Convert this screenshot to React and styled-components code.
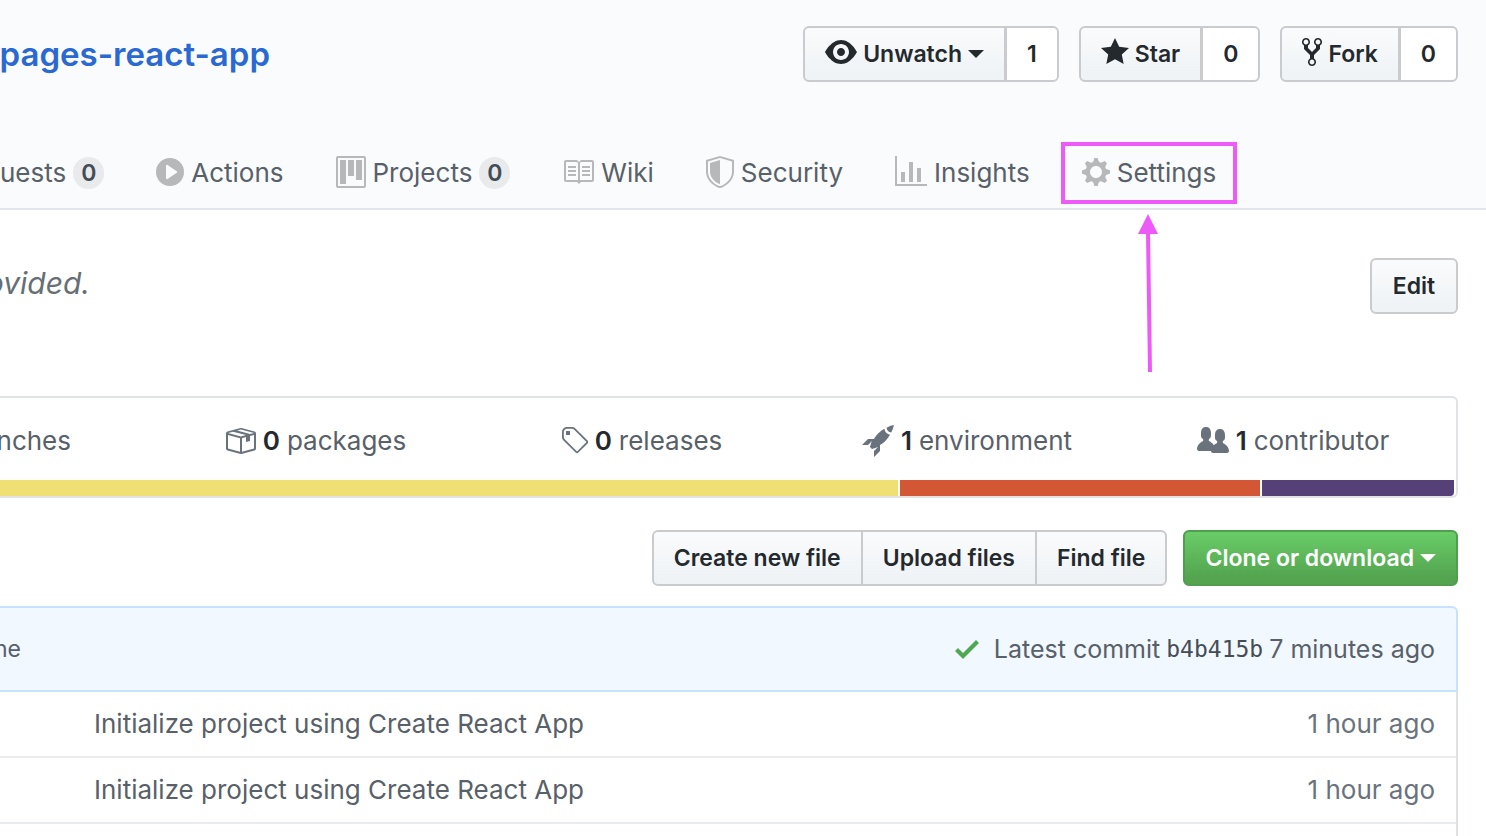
import React from "react";
import styled, { createGlobalStyle, css } from "styled-components";

const Global = createGlobalStyle`
  * { box-sizing: border-box; }
  body {
    margin: 0;
    background: #fff;
    color: #24292e;
    font-family: Inter, "Liberation Sans", sans-serif;
    font-size: 26px;
    line-height: 36px;
    overflow: hidden;
  }
  a { color: inherit; text-decoration: none; }
  button { font-family: inherit; cursor: pointer; }
`;

const PATHS = {
  eye: "M8.06 2C3 2 0 8 0 8s3 6 8.06 6C13 14 16 8 16 8s-3-6-7.94-6zM8 12c-2.2 0-4-1.78-4-4 0-2.2 1.8-4 4-4 2.22 0 4 1.8 4 4 0 2.22-1.78 4-4 4zm2-4c0 1.11-.89 2-2 2-1.11 0-2-.89-2-2 0-1.11.89-2 2-2 1.11 0 2 .89 2 2z",
  star: "M14 6l-4.9-.64L7 1 4.9 5.36 0 6l3.6 3.26L2.67 14 7 11.67 11.33 14l-.93-4.74L14 6z",
  fork: "M8 1a1.993 1.993 0 0 0-1 3.72V6L5 8 3 6V4.72A1.993 1.993 0 0 0 2 1a1.993 1.993 0 0 0-1 3.72V6.5l3 3v1.78A1.993 1.993 0 0 0 5 15a1.993 1.993 0 0 0 1-3.72V9.5l3-3V4.72A1.993 1.993 0 0 0 8 1zM2 4.2C1.34 4.2.8 3.65.8 3c0-.65.55-1.2 1.2-1.2.65 0 1.2.55 1.2 1.2 0 .65-.55 1.2-1.2 1.2zm3 10c-.66 0-1.2-.55-1.2-1.2 0-.65.55-1.2 1.2-1.2.65 0 1.2.55 1.2 1.2 0 .65-.55 1.2-1.2 1.2zm3-10c-.66 0-1.2-.55-1.2-1.2 0-.65.55-1.2 1.2-1.2.65 0 1.2.55 1.2 1.2 0 .65-.55 1.2-1.2 1.2z",
  play: "M14 8A7 7 0 1 1 0 8a7 7 0 0 1 14 0zm-8.223 3.482l4.599-3.066a.5.5 0 0 0 0-.832L5.777 4.518A.5.5 0 0 0 5 4.934v6.132a.5.5 0 0 0 .777.416z",
  project: "M10 12h3V2h-3v10zm-4-2h3V2H6v8zm-4 4h3V2H2v12zm-1 1h13V1H1v14zM14 0H1a1 1 0 0 0-1 1v14a1 1 0 0 0 1 1h13a1 1 0 0 0 1-1V1a1 1 0 0 0-1-1z",
  book: "M3 5h4v1H3V5zm0 3h4V7H3v1zm0 2h4V9H3v1zm11-5h-4v1h4V5zm0 2h-4v1h4V7zm0 2h-4v1h4V9zm2-6v9c0 .55-.45 1-1 1H9.5l-1 1-1-1H2c-.55 0-1-.45-1-1V3c0-.55.45-1 1-1h5.5l1 1 1-1H15c.55 0 1 .45 1 1zm-8 .5L7.5 3H2v9h6V3.5zm7-.5H9.5l-.5.5V12h6V3z",
  shield: "M0 2l7-2 7 2v6.02C14 12.69 8.69 16 7 16c-1.69 0-7-3.31-7-7.98V2zm1 .75L7 1l6 1.75v5.268C13 12.104 8.449 15 7 15c-1.449 0-6-2.896-6-6.982V2.75zm1 .75L7 2v12c-1.207 0-5-2.482-5-5.985V3.5z",
  graph: "M16 14v1H0V0h1v14h15zM5 13H3V8h2v5zm4 0H7V3h2v10zm4 0h-2V6h2v7z",
  gear: "M14 8.77v-1.6l-1.94-.64-.45-1.09.88-1.84-1.13-1.13-1.81.91-1.09-.45-.69-1.92h-1.6l-.63 1.94-1.11.45-1.84-.88-1.13 1.13.91 1.81-.45 1.09L0 7.23v1.59l1.94.64.45 1.09-.88 1.84 1.13 1.13 1.81-.91 1.09.45.69 1.92h1.59l.63-1.94 1.11-.45 1.84.88 1.13-1.13-.92-1.81.47-1.09L14 8.75v.02zM7 11c-1.66 0-3-1.34-3-3s1.34-3 3-3 3 1.34 3 3-1.34 3-3 3z",
  box: "M1 4.27v7.47c0 .45.3.84.75.97l6.5 1.73c.16.05.34.05.5 0l6.5-1.73c.45-.13.75-.52.75-.97V4.27c0-.45-.3-.84-.75-.97l-6.5-1.74a1.4 1.4 0 0 0-.5 0L1.75 3.3c-.45.13-.75.52-.75.97zm7 9.09l-6-1.59V5l6 1.61v6.75zM2 4l2.5-.67L11 5.06l-2.5.67L2 4zm13 7.77l-6 1.59V6.61l2-.55V8.5l2-.53V5.53L15 5v6.77zm-2-7.24L6.5 2.8l2-.53L15 4l-2 .53z",
  tag: "M7.73 1.73C7.26 1.26 6.62 1 5.96 1H3.5C2.13 1 1 2.13 1 3.5v2.47c0 .66.27 1.3.73 1.77l6.06 6.06c.39.39 1.02.39 1.41 0l4.59-4.59a.996.996 0 0 0 0-1.41L7.73 1.73zM2.38 7.09c-.31-.3-.47-.7-.47-1.13V3.5c0-.88.72-1.59 1.59-1.59h2.47c.42 0 .83.16 1.13.47l6.14 6.13-4.73 4.73-6.13-6.15zM3.01 3h2v2H3V3h.01z",
  rocket: "M12.17 3.83c-.27-.27-.47-.55-.63-.88-.16-.31-.27-.66-.34-1.02-.58.33-1.16.7-1.73 1.13-.58.44-1.14.94-1.69 1.48-.7.7-1.33 1.81-1.78 2.45H3L0 10h3l2-2c-.34.77-1.02 2.98-1 3l1 1c.02.02 2.23-.64 3-1l-2 2v3l3-3v-3c.64-.45 1.75-1.09 2.45-1.78.55-.55 1.05-1.13 1.47-1.7.44-.58.81-1.16 1.14-1.72-.36-.08-.7-.19-1.03-.34a3.39 3.39 0 0 1-.86-.63zM16 0s-.09.38-.3 1.06c-.2.7-.55 1.58-1.06 2.66-.7-.08-1.27-.33-1.66-.72-.39-.39-.63-.94-.7-1.64C13.36.84 14.23.48 14.92.28 15.62.08 16 0 16 0z",
  people: "M16 12.999c0 .439-.45 1-1 1H7.995c-.539 0-.994-.447-.995-.999H1c-.54 0-1-.561-1-1 0-2.634 3-4 3-4s.229-.409 0-1c-.841-.621-1.058-.59-1-3 .058-2.419 1.367-3 2.5-3s2.442.58 2.5 3c.058 2.41-.159 2.379-1 3-.229.59 0 1 0 1s1.549.711 2.42 2.088C9.196 9.369 10 8.999 10 8.999s.229-.409 0-1c-.841-.62-1.058-.59-1-3 .058-2.419 1.367-3 2.5-3s2.437.581 2.495 3c.059 2.41-.158 2.38-1 3-.229.59 0 1 0 1s3.005 1.366 3.005 4",
  check: "M12 5l-8 8-4-4 1.5-1.5L4 10l6.5-6.5L12 5z",
};

const Glyph = styled.svg`
  flex: none;
  display: block;
  height: 32px;
  fill: currentColor;
`;

function Icon({ name, w = 16 }) {
  return (
    <Glyph width={w * 2} viewBox={`0 0 ${w} 16`} aria-hidden="true">
      <path fillRule="evenodd" d={PATHS[name]} />
    </Glyph>
  );
}

const Page = styled.div`
  min-height: 100vh;
  display: flex;
  flex-direction: column;
`;

const Header = styled.header`
  background: #fafbfd;
  border-bottom: 2px solid #e1e4e8;
  padding: 26px 0 4px;
`;

const TitleRow = styled.div`
  display: flex;
  justify-content: space-between;
  align-items: center;
  padding-right: 28px;
`;

const Title = styled.h1`
  margin: 0;
  font-size: 33px;
  font-weight: 600;
  line-height: 56px;
  color: #2a69d2;
`;

const Clipped = styled.span`
  display: flex;
  justify-content: flex-end;
  overflow: hidden;
  white-space: nowrap;
  width: ${(p) => p.$width}px;
`;

const Actions = styled.div`
  display: flex;
  gap: 20px;
`;

const control = css`
  display: flex;
  align-items: center;
  justify-content: center;
  height: 56px;
  border: 2px solid #c9cbce;
  font-size: 23px;
  font-weight: 600;
  color: #24292e;
  white-space: nowrap;
`;

const Button = styled.button`
  ${control}
  gap: 6px;
  min-width: 88px;
  padding: 0 20px;
  border-radius: 6px;
  background: linear-gradient(#fafbfc, #eff3f6 90%);
  svg { margin-bottom: 4px; }
`;

const GreenButton = styled(Button)`
  color: #fff;
  border-color: #4f9f4f;
  background: linear-gradient(#69cd67, #53a34f 90%);
`;

const Group = styled.div`
  display: flex;
  & > * { border-radius: 0; }
  & > * + * { margin-left: -1px; border-left-width: 1px; }
  & > :first-child { border-radius: 6px 0 0 6px; }
  & > :last-child { border-radius: 0 6px 6px 0; }
`;

const Count = styled.a`
  ${control}
  padding: 0 20px;
  background: #fff;
`;

const Caret = styled.span`
  border: 8px solid transparent;
  border-top-color: currentColor;
  border-bottom: 0;
`;

const Tabs = styled.nav`
  display: flex;
  gap: 10px;
  margin-top: 60px;
`;

const Tab = styled.a`
  position: relative;
  display: flex;
  align-items: center;
  gap: 7px;
  height: 62px;
  padding: 0 17px;
  border: 4px solid ${(p) => (p.$marked ? "#ee5af8" : "transparent")};
  color: #586069;
  white-space: nowrap;
  ${(p) => p.$cut && "padding-left: 0; border-left: 0;"}
  ${Glyph} { color: #b7b8ba; margin-bottom: 2px; }
`;

const Badge = styled.span`
  min-width: 31px;
  padding: 0 7px;
  border-radius: 16px;
  background: #e8eaec;
  color: #444d56;
  font-size: 23px;
  font-weight: 600;
  line-height: 32px;
  text-align: center;
`;

const Arrow = styled.svg`
  position: absolute;
  left: 72px;
  top: 68px;
  z-index: 1;
`;

const Main = styled.main`
  flex: 1;
  display: flex;
  flex-direction: column;
  padding-right: 28px;
`;

const About = styled.section`
  display: flex;
  justify-content: space-between;
  align-items: center;
  margin-top: 48px;
`;

const Description = styled.em`
  color: #666e76;
  font-size: 30px;
  line-height: 36px;
  padding-bottom: 6px;
`;

const Summary = styled.section`
  margin-top: 82px;
  border: 2px solid #e0e2e6;
  border-left: 0;
  border-radius: 0 6px 6px 0;
`;

const Stats = styled.ul`
  display: grid;
  grid-template-columns: 152px repeat(4, 1fr);
  margin: 0;
  padding: 0;
  list-style: none;
`;

const Stat = styled.li`
  display: flex;
  justify-content: ${(p) => (p.$cut ? "flex-start" : "center")};
  height: 82px;
  padding-top: 3px;
  a {
    display: flex;
    align-items: center;
    gap: 7px;
    color: #586069;
    white-space: nowrap;
  }
  svg { color: #6a737d; }
  b { color: #24292e; font-weight: 600; }
`;

const LanguageBar = styled.div`
  display: flex;
  gap: 2px;
  height: 16px;
  padding-right: 2px;
`;

const Language = styled.span`
  flex: ${(p) => p.$share} 1 0;
  background: ${(p) => p.$color};
  &:last-child { border-bottom-right-radius: 4px; }
`;

const FileActions = styled.div`
  display: flex;
  justify-content: flex-end;
  gap: 16px;
  margin-top: 32px;
`;

const Commit = styled.div`
  display: flex;
  justify-content: space-between;
  align-items: center;
  height: 86px;
  margin-top: 20px;
  padding-right: 21px;
  border: 2px solid #c8e1ff;
  border-left: 0;
  border-radius: 0 6px 0 0;
  background: #f1f8ff;
  color: #586069;
  font-size: 25px;
`;

const CommitInfo = styled.div`
  display: flex;
  align-items: center;
  gap: 6px;
  white-space: nowrap;
  svg { color: #50a950; margin-right: 9px; }
`;

const Sha = styled.a`
  color: #444d56;
  font-family: "DejaVu Sans Mono", monospace;
  font-size: 23px;
`;

const Author = styled.span`
  font-size: 23px;
`;

const Files = styled.div`
  flex: 1;
  border-right: 2px solid #dfe2e5;
`;

const FileTable = styled.table`
  width: 100%;
  border-spacing: 0;
`;

const Cell = styled.td`
  height: 66px;
  padding: 0 ${(p) => (p.$age ? "21px" : "0")} 0 ${(p) => (p.$age ? "0" : "94px")};
  border-bottom: 2px solid #eaecef;
  text-align: ${(p) => (p.$age ? "right" : "left")};
  color: ${(p) => (p.$age ? "#6a737d" : "#586069")};
`;

const tabs = [
  { label: "Actions", icon: "play", w: 14 },
  { label: "Projects", icon: "project", w: 15, count: 0 },
  { label: "Wiki", icon: "book", w: 16 },
  { label: "Security", icon: "shield", w: 14 },
  { label: "Insights", icon: "graph", w: 16 },
];

const stats = [
  { icon: "box", w: 16, n: 0, label: "packages" },
  { icon: "tag", w: 14, n: 0, label: "releases" },
  { icon: "rocket", w: 16, n: 1, label: "environment" },
  { icon: "people", w: 16, n: 1, label: "contributor" },
];

const languages = [
  { color: "#f0df72", share: 898 },
  { color: "#d35635", share: 360 },
  { color: "#554078", share: 192 },
];

const files = [
  { message: "Initialize project using Create React App", age: "1 hour ago" },
  { message: "Initialize project using Create React App", age: "1 hour ago" },
];

export default function App() {
  return (
    <Page>
      <Global />
      <Header>
        <TitleRow>
          <Title>
            <a href="#repo"><Clipped $width={270}>pages-react-app</Clipped></a>
          </Title>
          <Actions>
            <Group>
              <Button type="button"><Icon name="eye" />Unwatch<Caret /></Button>
              <Count href="#watchers">1</Count>
            </Group>
            <Group>
              <Button type="button"><Icon name="star" w={14} />Star</Button>
              <Count href="#stargazers">0</Count>
            </Group>
            <Group>
              <Button type="button"><Icon name="fork" w={10} />Fork</Button>
              <Count href="#forks">0</Count>
            </Group>
          </Actions>
        </TitleRow>
        <Tabs aria-label="Repository">
          <Tab href="#pulls" $cut>uests <Badge>0</Badge></Tab>
          {tabs.map((t) => (
            <Tab key={t.label} href={`#${t.label.toLowerCase()}`}>
              <Icon name={t.icon} w={t.w} />
              {t.label}
              {t.count !== undefined && <Badge>{t.count}</Badge>}
            </Tab>
          ))}
          <Tab href="#settings" $marked>
            <Icon name="gear" w={14} />
            Settings
            <Arrow width="24" height="160" viewBox="0 0 24 160" aria-hidden="true">
              <path d="M11 0L21 20H1z" fill="#ee5af8" />
              <path d="M11 18L13 158" stroke="#ee5af8" strokeWidth="4" />
            </Arrow>
          </Tab>
        </Tabs>
      </Header>

      <Main>
        <About>
          <Description><Clipped $width={90}>ovided.</Clipped></Description>
          <Button type="button">Edit</Button>
        </About>

        <Summary>
          <Stats>
            <Stat $cut><a href="#branches"><Clipped $width={71}>nches</Clipped></a></Stat>
            {stats.map((s) => (
              <Stat key={s.label}>
                <a href={`#${s.label}`}>
                  <Icon name={s.icon} w={s.w} />
                  <b>{s.n}</b>
                  {s.label}
                </a>
              </Stat>
            ))}
          </Stats>
          <LanguageBar>
            {languages.map((l) => <Language key={l.color} $color={l.color} $share={l.share} />)}
          </LanguageBar>
        </Summary>

        <FileActions>
          <Group>
            <Button type="button">Create new file</Button>
            <Button type="button">Upload files</Button>
            <Button type="button">Find file</Button>
          </Group>
          <GreenButton type="button">Clone or download<Caret /></GreenButton>
        </FileActions>

        <Commit>
          <Author><Clipped $width={21}>ne</Clipped></Author>
          <CommitInfo>
            <Icon name="check" w={12} />
            <span>Latest commit</span>
            <Sha href="#commit">b4b415b</Sha>
            <span>7 minutes ago</span>
          </CommitInfo>
        </Commit>

        <Files>
          <FileTable>
            <tbody>
              {files.map((f, i) => (
                <tr key={i}>
                  <Cell><a href="#commit">{f.message}</a></Cell>
                  <Cell $age>{f.age}</Cell>
                </tr>
              ))}
            </tbody>
          </FileTable>
        </Files>
      </Main>
    </Page>
  );
}
